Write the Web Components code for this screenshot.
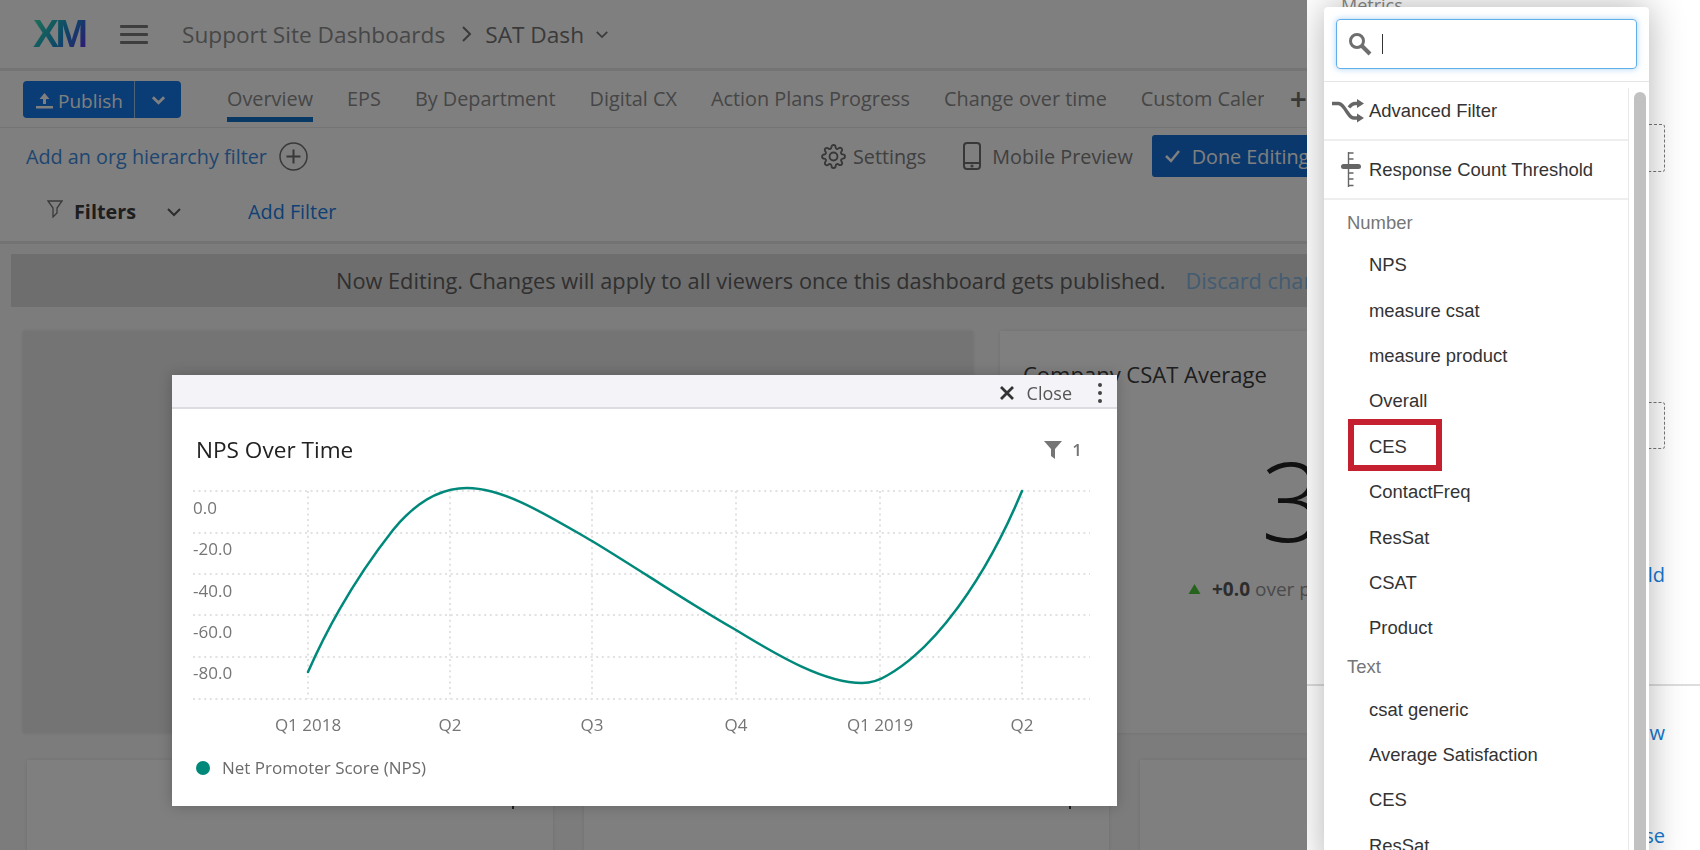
<!DOCTYPE html>
<html>
<head>
<meta charset="utf-8">
<title>SAT Dash</title>
<style>
  html, body { margin: 0; width: 1700px; height: 850px; overflow: hidden; background: #f9f9f9; }
  body { position: relative; font-family: "Open Sans", sans-serif; }
</style>
</head>
<body>
<x-topbar></x-topbar>
<x-tabbar></x-tabbar>
<x-toolbar></x-toolbar>
<x-filterbar></x-filterbar>
<x-banner></x-banner>
<x-dashboard>
  <x-card kind="hover"></x-card>
  <x-card kind="metric" title-text="Company CSAT Average"></x-card>
</x-dashboard>
<x-dashboard low>
  <x-card></x-card>
  <x-card></x-card>
  <x-card></x-card>
</x-dashboard>
<x-scrim></x-scrim>
<x-modal></x-modal>
<x-panel></x-panel>

<script>
const chevron = (w, h, color, sw = 2) => `<svg width="${w}" height="${h}" viewBox="0 0 16 10"><path d="M2 2l6 6 6-6" fill="none" stroke="${color}" stroke-width="${sw}"/></svg>`;

class ShadowElement extends HTMLElement {
  constructor() {
    super();
    this.attachShadow({ mode: 'open' });
  }
  connectedCallback() {
    this.shadowRoot.innerHTML = this.render();
  }
}

class TopBar extends ShadowElement {
  render() {
    return `<style>
      :host { display: flex; align-items: center; height: 68px; padding-left: 33px; background: #fff; border-bottom: 3px solid #e8e8e8; color: #8e8e8e; font-size: 22.650px; }
      .logo { width: 54px; font: bold 39px "Liberation Sans", sans-serif; letter-spacing: -3.400px; line-height: 30px; background: linear-gradient(125deg, #36d8b4 8%, #1a90d0 55%, #5a38e8 95%); -webkit-background-clip: text; background-clip: text; color: transparent; }
      .menu { width: 28px; height: 19px; margin: 0 34px 0 33px; display: flex; flex-direction: column; justify-content: space-between; }
      .menu i { height: 3px; background: #7c7c7c; border-radius: 1px; }
      .sep { margin: 0 13px 0 16px; display: flex; }
      b { font-weight: 400; color: #757575; }
      .chev { margin-left: 11px; display: flex; }
    </style>
    <span class="logo">XM</span>
    <span class="menu"><i></i><i></i><i></i></span>
    <span>Support Site Dashboards</span>
    <span class="sep"><svg width="11" height="18" viewBox="0 0 11 18"><path d="M2 2l7 7-7 7" fill="none" stroke="#757575" stroke-width="2"/></svg></span>
    <b>SAT Dash</b>
    <span class="chev">${chevron(14, 9, '#757575')}</span>`;
  }
}

class TabBar extends ShadowElement {
  render() {
    const tabs = ['Overview', 'EPS', 'By Department', 'Digital CX', 'Action Plans Progress', 'Change over time'];
    return `<style>
      :host { display: flex; height: 56px; padding-left: 23px; background: #fff; border-bottom: 1px solid #e8e8e8; color: #8c8c8c; font-size: 19.850px; }
      .publish { display: flex; align-self: flex-start; margin: 10px 46px 0 0; width: 158px; height: 37px; border-radius: 4px; background: #1478ea; color: #fff; font-size: 19px; }
      .publish span { display: flex; align-items: center; gap: 5px; padding: 2px 0 0 13px; width: 98px; border-right: 1px solid #9cc4f0; }
      .publish em { flex: 1; display: flex; align-items: center; justify-content: center; }
      .tab { display: flex; align-items: center; height: 51px; padding-top: 8px; box-sizing: border-box; margin-right: 34px; border-bottom: 5px solid transparent; white-space: nowrap; }
      .tab.on { border-bottom-color: #0f72c8; }
      .clip { width: 123px; overflow: hidden; margin-right: 0; display: block; line-height: 39px; }
      .plus { font-size: 30px; font-weight: 600; margin: 0 0 0 26px; color: #707070; }
    </style>
    <div class="publish"><span><svg width="17" height="17" viewBox="0 0 17 17"><path d="M8.500 1l5 6h-3.500v5H7V7H3.500zM0 14h17v2.500H0z" fill="#fff"/></svg>Publish</span><em>${chevron(15, 10, '#fff', 3)}</em></div>
    ${tabs.map((t, i) => `<div class="tab ${i ? '' : 'on'}">${t}</div>`).join('')}
    <div class="tab clip">Custom Calendar</div>
    <div class="tab plus">+</div>`;
  }
}

class ToolBar extends ShadowElement {
  render() {
    return `<style>
      :host { display: flex; align-items: center; box-sizing: border-box; height: 57px; padding: 0 0 1px 26px; background: #fff; font-size: 19.800px; color: #808080; white-space: nowrap; }
      .org { color: #3c8ce0; }
      .add { margin-left: 12px; display: flex; }
      .set { display: flex; align-items: center; gap: 7px; margin-left: 513px; }
      .mob { display: flex; align-items: center; gap: 11px; margin-left: 37px; }
      .done { display: flex; align-items: center; gap: 11px; margin-left: 19px; height: 42px; padding: 0 16px 0 12px; border-radius: 3px; background: #1470d8; color: #fff; }
    </style>
    <span class="org">Add an org hierarchy filter</span>
    <span class="add"><svg width="29" height="29" viewBox="0 0 29 29" fill="none" stroke="#707070" stroke-width="1.500"><circle cx="14.500" cy="14.500" r="13.500"/><path d="M14.500 7.500v14M7.500 14.500h14" stroke-width="2"/></svg></span>
    <span class="set"><svg width="25" height="25" viewBox="0 0 24 24" fill="none" stroke="#707070" stroke-width="1.800"><circle cx="12" cy="12" r="3.800"/><path d="M19.400 15a1.650 1.650 0 0 0 .33 1.820l.06.06a2 2 0 0 1 0 2.830 2 2 0 0 1-2.830 0l-.06-.06a1.650 1.650 0 0 0-1.820-.33 1.650 1.650 0 0 0-1 1.510V21a2 2 0 0 1-2 2 2 2 0 0 1-2-2v-.09A1.650 1.650 0 0 0 9 19.400a1.650 1.650 0 0 0-1.820.33l-.06.06a2 2 0 0 1-2.830 0 2 2 0 0 1 0-2.830l.06-.06a1.650 1.650 0 0 0 .33-1.820 1.650 1.650 0 0 0-1.510-1H3a2 2 0 0 1-2-2 2 2 0 0 1 2-2h.09A1.650 1.650 0 0 0 4.600 9a1.650 1.650 0 0 0-.33-1.820l-.06-.06a2 2 0 0 1 0-2.830 2 2 0 0 1 2.830 0l.06.06a1.650 1.650 0 0 0 1.820.33H9a1.650 1.650 0 0 0 1-1.510V3a2 2 0 0 1 2-2 2 2 0 0 1 2 2v.09a1.650 1.650 0 0 0 1 1.510 1.650 1.650 0 0 0 1.820-.33l.06-.06a2 2 0 0 1 2.830 0 2 2 0 0 1 0 2.830l-.06.06a1.650 1.650 0 0 0-.33 1.820V9a1.650 1.650 0 0 0 1.510 1H21a2 2 0 0 1 2 2 2 2 0 0 1-2 2h-.09a1.650 1.650 0 0 0-1.510 1z"/></svg>Settings</span>
    <span class="mob"><svg width="18" height="28" viewBox="0 0 18 28" fill="none" stroke="#707070" stroke-width="2"><rect x="1" y="1" width="16" height="26" rx="3"/><path d="M1 21h16"/><circle cx="9" cy="24" r=".6" fill="#707070"/></svg>Mobile Preview</span>
    <span class="done"><svg width="17" height="14" viewBox="0 0 17 14"><path d="M2 7l5 5 8-10" fill="none" stroke="#fff" stroke-width="2.500"/></svg>Done Editing</span>`;
  }
}

class FilterBar extends ShadowElement {
  render() {
    return `<style>
      :host { display: flex; align-items: center; box-sizing: border-box; height: 59px; padding: 0 0 3px 47px; background: #fff; border-bottom: 3px solid #e6e6e6; font-size: 19.800px; white-space: nowrap; }
      svg.funnel { margin: -6px 11px 0 0; }
      b { color: #3c3c3c; font-weight: 700; margin: -1px 30px 0 0; }
      .add { color: #1c80e8; margin-left: 66px; }
      .chev { display: flex; }
    </style>
    <svg class="funnel" width="16" height="18" viewBox="0 0 16 18"><path d="M1 1h14L10 8v5l-4 4V8z" fill="none" stroke="#757575" stroke-width="1.300"/></svg>
    <b>Filters</b>
    <span class="chev">${chevron(16, 10, '#5a5a5a')}</span>
    <span class="add">Add Filter</span>`;
  }
}

class Banner extends ShadowElement {
  render() {
    return `<style>
      :host { display: flex; align-items: center; height: 53px; margin: 10px 0 0 11px; padding-left: 325px; background: #dcdcdc; font-size: 21.770px; color: #606060; white-space: nowrap; overflow: hidden; }
      a { color: #84b8e4; margin-left: 20px; }
    </style>
    Now Editing. Changes will apply to all viewers once this dashboard gets published.
    <a>Discard changes</a>`;
  }
}

class Dashboard extends ShadowElement {
  render() {
    return `<style>
      :host { display: grid; grid-template-columns: 950px 664px; gap: 27px; padding: 24px 0 0 23px; }
      :host([low]) { grid-template-columns: 526px 525px 525px; gap: 31px; padding: 27px 0 0 27px; }
    </style>
    <slot></slot>`;
  }
}

class Card extends ShadowElement {
  render() {
    const kind = this.getAttribute('kind');
    const body = kind === 'metric' ? `
      <div class="title">${this.getAttribute('title-text')}</div>
      <div class="num">3</div>
      <div class="delta"><svg width="13" height="10" viewBox="0 0 13 10"><path d="M6.500 0l6 10H.5z" fill="#4cc83c"/></svg><b>+0.0</b> over prior period</div>` : '';
    return `<style>
      :host { display: block; box-sizing: border-box; height: 402px; background: #fff; box-shadow: 0 0 4px rgba(0,0,0,.1); overflow: hidden; position: relative; }
      :host([kind="hover"]) { background: #e8e8e8; }
      :host(:not([kind])) { height: 120px; }
      :host(:not([kind]))::after { content: ""; position: absolute; left: 485px; top: 46px; width: 2px; height: 3px; background: #444; }
      .title { padding: 28px 0 0 23px; font-size: 22px; color: #3c3c3c; }
      .num { margin: 60px 0 0 261px; font-size: 110px; line-height: 100px; font-weight: 300; color: #222; }
      .delta { display: flex; align-items: center; gap: 11px; margin: 27px 0 0 188px; font-size: 19px; color: #949494; white-space: nowrap; }
      .delta b { color: #5a5a5a; margin-right: -6px; }
    </style>${body}`;
  }
}

class Scrim extends ShadowElement {
  render() {
    return `<style>:host { position: fixed; inset: 0; background: rgba(0,0,0,.5); }</style>`;
  }
}

class LineChart extends ShadowElement {
  render() {
    const xs = [308, 450, 592, 736, 880, 1022];
    const ys = [491, 533, 574, 615, 657, 699];
    const yLabels = ['0.0', '-20.0', '-40.0', '-60.0', '-80.0'];
    const xLabels = ['Q1 2018', 'Q2', 'Q3', 'Q4', 'Q1 2019', 'Q2'];
    return `<style>
      :host { display: block; height: 260px; }
      svg { display: block; }
      text { font: 17px "Open Sans", sans-serif; fill: #757575; }
      .g { stroke: #e2e2e2; stroke-width: 2; stroke-dasharray: 2 3.600; fill: none; }
    </style>
    <svg width="945" height="260" viewBox="172 480 945 260">
      ${ys.map(y => `<path class="g" d="M193 ${y}H1090"/>`).join('')}
      ${xs.map(x => `<path class="g" d="M${x} 491V699"/>`).join('')}
      ${yLabels.map((t, i) => `<text x="193" y="${514 + i * 41.3}">${t}</text>`).join('')}
      ${xLabels.map((t, i) => `<text x="${xs[i]}" y="731" text-anchor="middle">${t}</text>`).join('')}
      <path d="M308 672C330 622 360 572 393 530C415 503 440 488 467 488C505 488 550 517 592 541C640 570 690 604 736 630C780 657 825 683 862 683C873 683 880 680 888 675C935 648 985 580 1022 491" fill="none" stroke="#00897b" stroke-width="2.500" stroke-linecap="round"/>
    </svg>`;
  }
}

class Modal extends ShadowElement {
  render() {
    return `<style>
      :host { position: absolute; left: 172px; top: 375px; width: 945px; height: 431px; background: #fff; border-radius: 2px 2px 0 0; box-shadow: 0 0 14px rgba(0,0,0,.22); display: flex; flex-direction: column; }
      .head { display: flex; align-items: center; justify-content: flex-end; box-sizing: content-box; height: 28px; padding: 4px 15px 0 0; background: #f3f3f8; border-bottom: 2px solid #dcdce2; font-size: 18px; color: #555; }
      .head .x { display: flex; margin-right: 12px; }
      .dots { display: flex; flex-direction: column; gap: 4px; margin-left: 26px; }
      .dots i { width: 4px; height: 4px; border-radius: 50%; background: #444; }
      .row { display: flex; align-items: center; justify-content: space-between; box-sizing: border-box; height: 71px; padding: 10px 35px 0 24px; }
      .row h2 { margin: 0; font-size: 22.600px; font-weight: 400; color: #222; }
      .fil { display: flex; align-items: center; gap: 10px; font-size: 17px; font-weight: 600; color: #757575; }
      .legend { display: flex; align-items: center; gap: 12px; padding-left: 24px; margin-top: 16px; font-size: 17px; color: #6b6b6b; }
      .legend i { width: 14px; height: 14px; border-radius: 50%; background: #00897b; }
    </style>
    <div class="head">
      <span class="x"><svg width="16" height="16" viewBox="0 0 16 16"><path d="M2 2l12 12M14 2L2 14" stroke="#333" stroke-width="2.800" fill="none"/></svg></span>
      Close
      <span class="dots"><i></i><i></i><i></i></span>
    </div>
    <div class="row">
      <h2>NPS Over Time</h2>
      <span class="fil"><svg width="18" height="18" viewBox="0 0 18 18"><path d="M0 0h18l-7 8v10l-4-3V8z" fill="#757575"/></svg>1</span>
    </div>
    <x-line-chart></x-line-chart>
    <div class="legend"><i></i>Net Promoter Score (NPS)</div>`;
  }
}

class Option extends ShadowElement {
  render() {
    return `<style>
      :host { display: flex; align-items: center; height: 45.400px; padding-left: 45px; font-size: 18.450px; color: #333; position: relative; flex: none; }
      :host([marked])::after { content: ""; position: absolute; left: 24px; top: -5.500px; width: 82px; height: 40px; border: 6px solid #c4202f; }
    </style><slot></slot>`;
  }
}

class OptionGroup extends ShadowElement {
  render() {
    return `<style>
      :host { display: flex; align-items: center; flex: none; box-sizing: border-box; height: 36px; padding: 0 0 4px 23px; font-size: 18.450px; color: #767676; }
    </style><slot></slot>`;
  }
}

class ActionRow extends ShadowElement {
  render() {
    return `<style>
      :host { display: flex; align-items: center; flex: none; height: 57px; padding-left: 45px; border-bottom: 2px solid #eee; font-size: 18.450px; color: #333; position: relative; }
      ::slotted(svg) { position: absolute; }
    </style><slot name="icon"></slot><span><slot></slot></span>`;
  }
}

class Picker extends ShadowElement {
  render() {
    return `<style>
      :host { position: absolute; left: 17px; top: 7px; width: 325px; height: 860px; background: #fff; border-radius: 4px 4px 0 0; box-shadow: 0 0 36px rgba(0,0,0,.3); display: flex; flex-direction: column; font-family: "Liberation Sans", sans-serif; }
      .search { flex: none; height: 74px; border-bottom: 1px solid #e6e6e6; padding: 0 12px; display: flex; align-items: center; }
      .box { flex: 1; display: flex; align-items: center; height: 48px; border: 1px solid #62aeea; border-radius: 4px; box-shadow: 0 0 6px rgba(98,174,234,.55); padding-left: 11px; gap: 10px; }
      .caret { width: 1px; height: 20px; background: #333; }
      .main { flex: 1; display: flex; min-height: 0; }
      .list { width: 304px; display: flex; flex-direction: column; overflow: hidden; }
      .track { flex: 1; margin-top: 6px; border-left: 1px solid #e8e8e8; }
      .thumb { width: 12px; height: 900px; margin: 4px 0 0 5px; border-radius: 6px; background: #c1c1c1; }
      .gap { flex: none; height: 6.500px; }
    </style>
    <div class="search"><div class="box">
      <svg width="24" height="24" viewBox="0 0 24 24" fill="none" stroke="#6e6e6e"><circle cx="9" cy="9" r="6.500" stroke-width="3"/><path d="M14 14l8 8" stroke-width="4"/></svg>
      <span class="caret"></span>
    </div></div>
    <div class="main">
      <div class="list">
        <x-action-row><svg slot="icon" style="left:8px" width="33" height="24" viewBox="0 0 33 24" fill="none" stroke="#666" stroke-width="3.400"><path d="M0 4.500h6c4 0 5 3 8 7s4 7.500 8 7.500h5M17 8.500c2-2.500 3-4 6-4h4"/><path d="M25 0l7 4.500-7 4.500zM25 14.500l7 4.500-7 4.500z" fill="#666" stroke="none"/></svg>Advanced Filter</x-action-row>
        <x-action-row><svg slot="icon" style="left:17px" width="21" height="35" viewBox="0 0 21 35" fill="none" stroke="#666"><path d="M7.500 0v35M7.500 1h5M7.500 7h5M7.500 21h5M7.500 27h5M7.500 33.500h5" stroke-width="1.400"/><path d="M2.500 14.500h15" stroke-width="5" stroke-linecap="round"/></svg>Response Count Threshold</x-action-row>
        <div class="gap"></div>
        <x-option-group>Number</x-option-group>
        <x-option>NPS</x-option>
        <x-option>measure csat</x-option>
        <x-option>measure product</x-option>
        <x-option>Overall</x-option>
        <x-option marked>CES</x-option>
        <x-option>ContactFreq</x-option>
        <x-option>ResSat</x-option>
        <x-option>CSAT</x-option>
        <x-option>Product</x-option>
        <x-option-group>Text</x-option-group>
        <x-option>csat generic</x-option>
        <x-option>Average Satisfaction</x-option>
        <x-option>CES</x-option>
        <x-option>ResSat</x-option>
      </div>
      <div class="track"><div class="thumb"></div></div>
    </div>`;
  }
}

class Panel extends ShadowElement {
  render() {
    return `<style>
      :host { position: absolute; left: 1307px; top: 0; width: 393px; height: 850px; box-sizing: border-box; background: #fff; overflow: hidden; display: flex; flex-direction: column; align-items: flex-end; padding-right: 35px; font-size: 20px; color: #1478d0; }
      .metrics { align-self: flex-start; margin: -7px 0 0 34px; color: #8a8a8a; font-size: 18px; line-height: 24px; }
      .drop { width: 60px; height: 49px; margin-top: 107px; border: 1px dashed #777; border-left: 0; border-radius: 0 3px 3px 0; }
      .drop.two { margin-top: 230px; }
      .link { white-space: nowrap; height: 28px; line-height: 28px; }
      .rule { align-self: stretch; margin: 95px -35px 0 0; height: 2px; background: #ddd; flex: none; }
    </style>
    <div class="metrics">Metrics</div>
    <div class="drop"></div>
    <div class="drop two"></div>
    <div class="link" style="margin-top:112px">Add Field</div>
    <div class="rule"></div>
    <div class="link" style="margin-top:33px">View</div>
    <div class="link" style="margin-top:75px">Close</div>
    <x-picker></x-picker>`;
  }
}

customElements.define('x-topbar', TopBar);
customElements.define('x-tabbar', TabBar);
customElements.define('x-toolbar', ToolBar);
customElements.define('x-filterbar', FilterBar);
customElements.define('x-banner', Banner);
customElements.define('x-dashboard', Dashboard);
customElements.define('x-card', Card);
customElements.define('x-scrim', Scrim);
customElements.define('x-line-chart', LineChart);
customElements.define('x-modal', Modal);
customElements.define('x-option', Option);
customElements.define('x-option-group', OptionGroup);
customElements.define('x-action-row', ActionRow);
customElements.define('x-picker', Picker);
customElements.define('x-panel', Panel);
</script>
</body>
</html>
